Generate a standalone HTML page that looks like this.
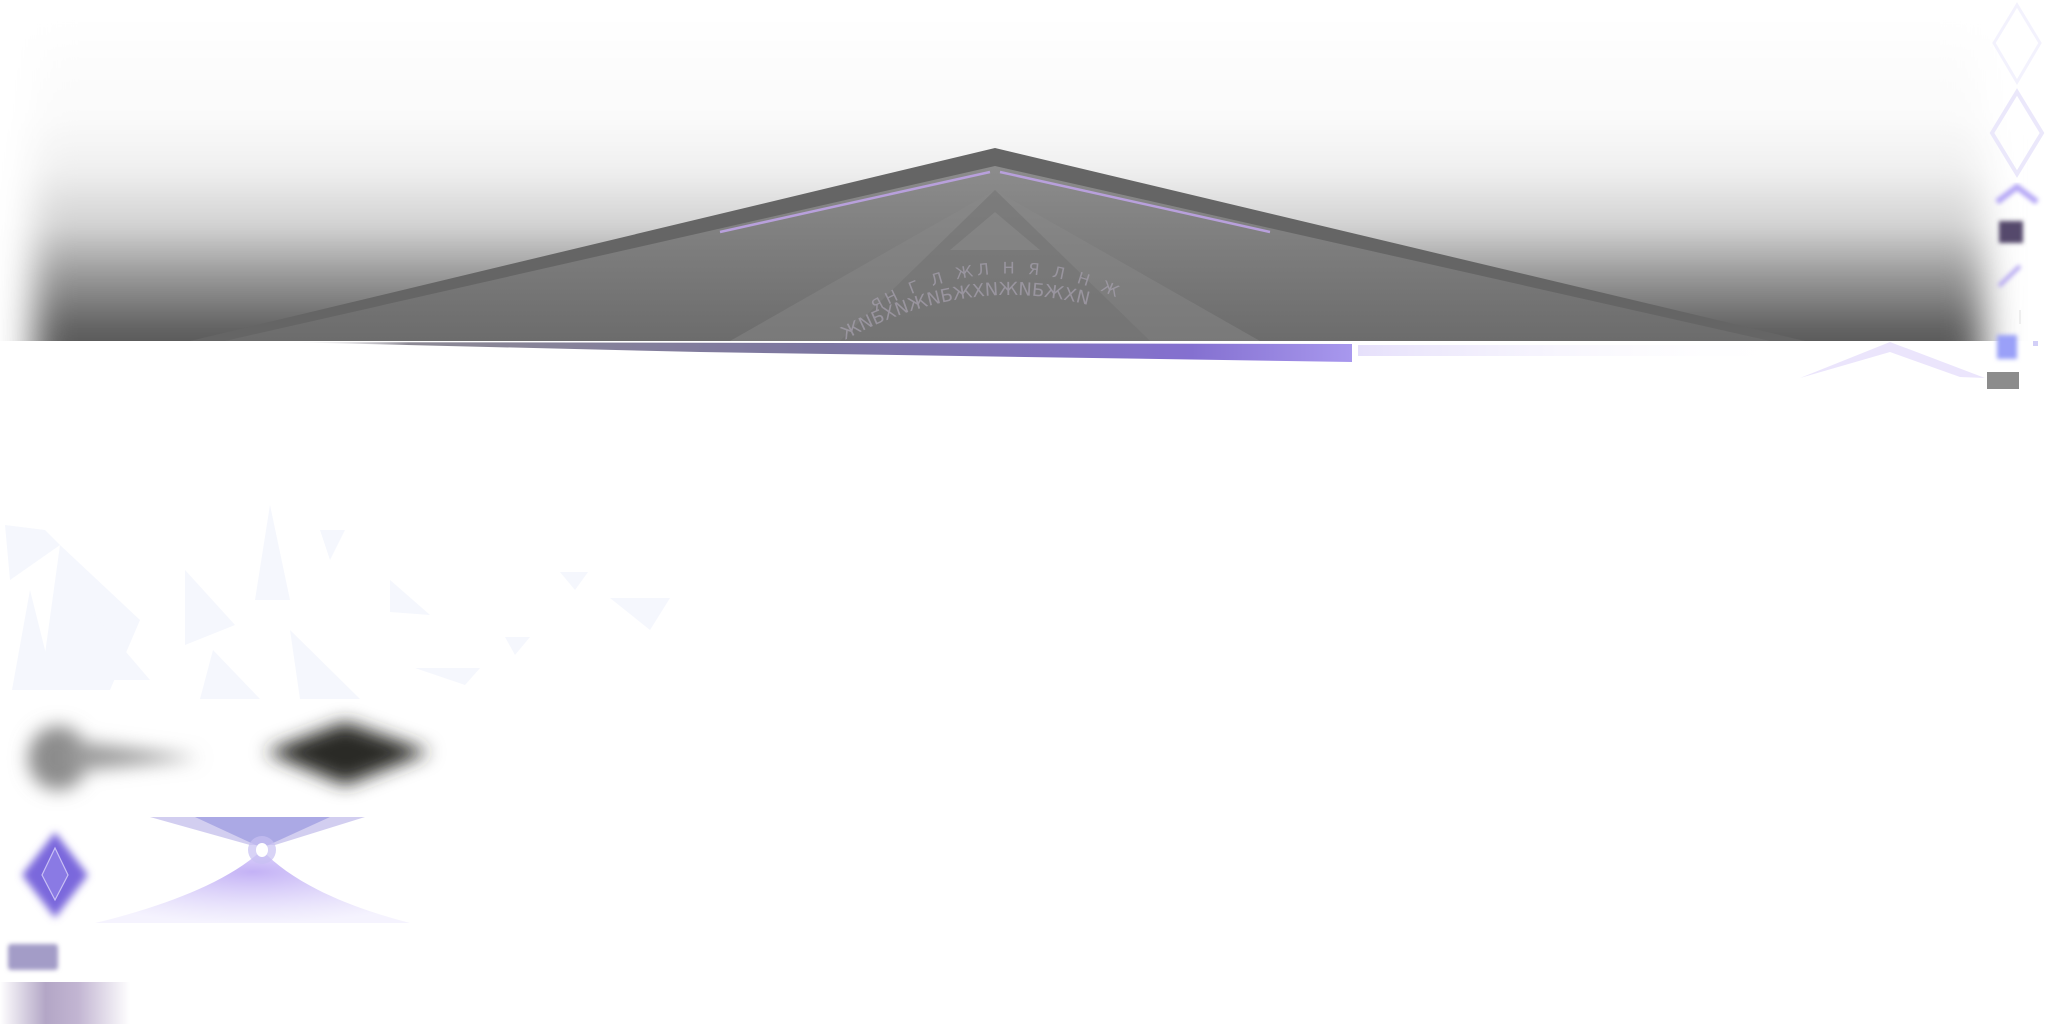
<!DOCTYPE html>
<html><head><meta charset="utf-8"><style>
html,body{margin:0;padding:0;background:#fff;width:2048px;height:1024px;overflow:hidden}
svg{display:block}
</style></head><body>
<svg width="2048" height="1024" viewBox="0 0 2048 1024" xmlns="http://www.w3.org/2000/svg">
<defs>
<linearGradient id="band" x1="0" y1="0" x2="0" y2="1">
<stop offset="0" stop-color="#ffffff"/><stop offset="0.3" stop-color="#fafafa"/><stop offset="0.44" stop-color="#f0f0f0"/><stop offset="0.6" stop-color="#d2d2d2"/><stop offset="0.73" stop-color="#9c9c9c"/><stop offset="0.88" stop-color="#646464"/><stop offset="1" stop-color="#4c4c4c"/>
</linearGradient>
<clipPath id="bandclip"><rect x="0" y="0" width="2048" height="341"/></clipPath>
<clipPath id="pyrclip"><polygon points="995,166 1770,341 225,341"/></clipPath>
<filter id="bh" x="-10%" y="-10%" width="120%" height="120%"><feGaussianBlur stdDeviation="18 6"/></filter>
<filter id="b8" x="-30%" y="-30%" width="160%" height="160%"><feGaussianBlur stdDeviation="9"/></filter>
<filter id="b4" x="-30%" y="-30%" width="160%" height="160%"><feGaussianBlur stdDeviation="4"/></filter>
<filter id="b2" x="-30%" y="-30%" width="160%" height="160%"><feGaussianBlur stdDeviation="2"/></filter>
<linearGradient id="bar" x1="0" y1="0" x2="1" y2="0">
<stop offset="0" stop-color="#fff" stop-opacity="0"/><stop offset="0.12" stop-color="#8c8994"/><stop offset="0.5" stop-color="#7c76a0"/><stop offset="0.85" stop-color="#8470d0"/><stop offset="1" stop-color="#a898ee"/>
</linearGradient>
<linearGradient id="bar2" x1="0" y1="0" x2="1" y2="0">
<stop offset="0" stop-color="#e6e0fb"/><stop offset="1" stop-color="#fff" stop-opacity="0"/>
</linearGradient>
<linearGradient id="pyr" x1="0" y1="0" x2="0" y2="1">
<stop offset="0" stop-color="#8c8c8c"/><stop offset="1" stop-color="#6c6c6c"/>
</linearGradient>
<radialGradient id="hg" cx="0.5" cy="0.3" r="0.7">
<stop offset="0" stop-color="#b9a4f4"/><stop offset="1" stop-color="#d8d0fa" stop-opacity="0.3"/>
</radialGradient>
<linearGradient id="strip" x1="0" y1="0" x2="1" y2="0">
<stop offset="0" stop-color="#fff"/><stop offset="0.35" stop-color="#b3a6c6"/><stop offset="0.6" stop-color="#c2b5d2"/><stop offset="1" stop-color="#fff"/>
</linearGradient>
<path id="arc1" d="M845,340 Q1010,250 1175,340"/>
<path id="arc2" d="M875,312 Q1010,235 1145,312"/>
</defs>

<!-- gray band -->
<g clip-path="url(#bandclip)">
<rect x="34" y="10" width="1950" height="360" fill="url(#band)" filter="url(#bh)"/>
</g>

<!-- pyramid -->
<polygon points="995,148 1805,341 190,341" fill="#656565"/>
<polygon points="995,166 1770,341 225,341" fill="url(#pyr)"/>
<g clip-path="url(#pyrclip)">
<polygon points="995,190 1260,341 730,341" fill="#8a8a8a" opacity="0.45"/>
<polygon points="995,190 1150,341 840,341" fill="#707070" opacity="0.5"/>
<polygon points="995,212 1040,250 950,250" fill="#999" opacity="0.35"/>
</g>
<polyline points="720,232 990,172" fill="none" stroke="#b8a0dc" stroke-width="2.5"/>
<polyline points="1000,172 1270,232" fill="none" stroke="#b8a0dc" stroke-width="2.5"/>
<g font-family="'DejaVu Sans',sans-serif" font-size="18" fill="#a8a2b0" opacity="0.7">
<text><textPath href="#arc1">ЖNБXNЖNБЖXNЖNБЖXN</textPath></text>
<text font-size="16" letter-spacing="4"><textPath href="#arc2">ЯH Г Л ЖЛ Н Я Л Н Ж</textPath></text>
</g>

<!-- bar -->
<polygon points="280,342 1352,344 1352,362 700,352" fill="url(#bar)"/>
<rect x="1358" y="345" width="440" height="11" fill="url(#bar2)"/>
<polygon points="1890,342 1985,378 1960,377 1890,352 1800,378" fill="#ebe5fc"/>

<!-- right icons -->
<polygon points="2017,5 2040,43 2017,82 1994,43" fill="none" stroke="#f3f2fd" stroke-width="3"/>
<polygon points="2017,92 2042,133 2017,174 1992,133" fill="none" stroke="#ebe8fb" stroke-width="4"/>
<polyline points="1997,202 2017,187 2037,202" fill="none" stroke="#b6a8f6" stroke-width="6" filter="url(#b2)"/>
<rect x="1999" y="221" width="24" height="22" fill="#54486c" filter="url(#b2)"/>
<line x1="1999" y1="286" x2="2020" y2="266" stroke="#b6a8f2" stroke-width="4" filter="url(#b2)"/>
<line x1="2020" y1="310" x2="2020" y2="324" stroke="#eee" stroke-width="2"/>
<rect x="1997" y="335" width="20" height="24" fill="#9aa0f8" filter="url(#b2)"/>
<rect x="2033" y="341" width="5" height="5" fill="#d2cff7"/>
<rect x="1987" y="372" width="32" height="17" fill="#8c8c8c"/>

<!-- triangles -->
<g fill="#f5f7fd">
<polygon points="5,525 45,530 60,545 10,580"/>
<polygon points="60,545 140,620 110,690 40,690"/>
<polygon points="30,590 55,690 12,690"/>
<polygon points="90,610 150,680 90,680"/>
<polygon points="185,570 235,625 185,645"/>
<polygon points="270,505 290,600 255,600"/>
<polygon points="320,530 345,530 330,560"/>
<polygon points="390,580 430,615 390,612"/>
<polygon points="213,650 260,699 200,699"/>
<polygon points="290,630 360,699 300,699"/>
<polygon points="560,572 588,572 575,590"/>
<polygon points="610,598 670,598 650,630"/>
<polygon points="415,668 480,668 465,685"/>
<polygon points="505,637 530,637 515,655"/>
</g>

<!-- blurry shapes -->
<g filter="url(#b8)">
<ellipse cx="58" cy="758" rx="30" ry="32" fill="#8c8c8c"/>
<polygon points="70,740 200,758 70,772" fill="#9a9a9a"/>
<polygon points="265,752 345,722 430,752 345,785" fill="#2c2c28"/>
</g>

<!-- purple diamond -->
<polygon points="55,832 88,875 55,918 22,875" fill="#7a68dc" filter="url(#b4)"/>
<polygon points="55,848 68,875 55,900 42,875" fill="#8a7ae4" stroke="#c9c0f5" stroke-width="1.2"/>

<!-- hourglass -->
<path d="M150,817 L365,817 L275,845 L250,845 Z" fill="#b4aee6" opacity="0.6"/>
<path d="M195,817 L330,817 L262,848 Z" fill="#9a9ae0" opacity="0.7"/>
<path d="M262,850 C230,880 170,905 95,923 L410,923 C340,905 290,880 262,850 Z" fill="url(#hg)" opacity="0.85"/>
<circle cx="262" cy="850" r="14" fill="#c8c0f2" opacity="0.7"/>
<ellipse cx="262" cy="850" rx="6" ry="7" fill="#fff"/>

<!-- small rect & strip -->
<rect x="8" y="944" width="50" height="26" rx="3" fill="#a39cc7" filter="url(#b2)"/>
<rect x="0" y="982" width="130" height="42" fill="url(#strip)"/>
</svg>
</body></html>
